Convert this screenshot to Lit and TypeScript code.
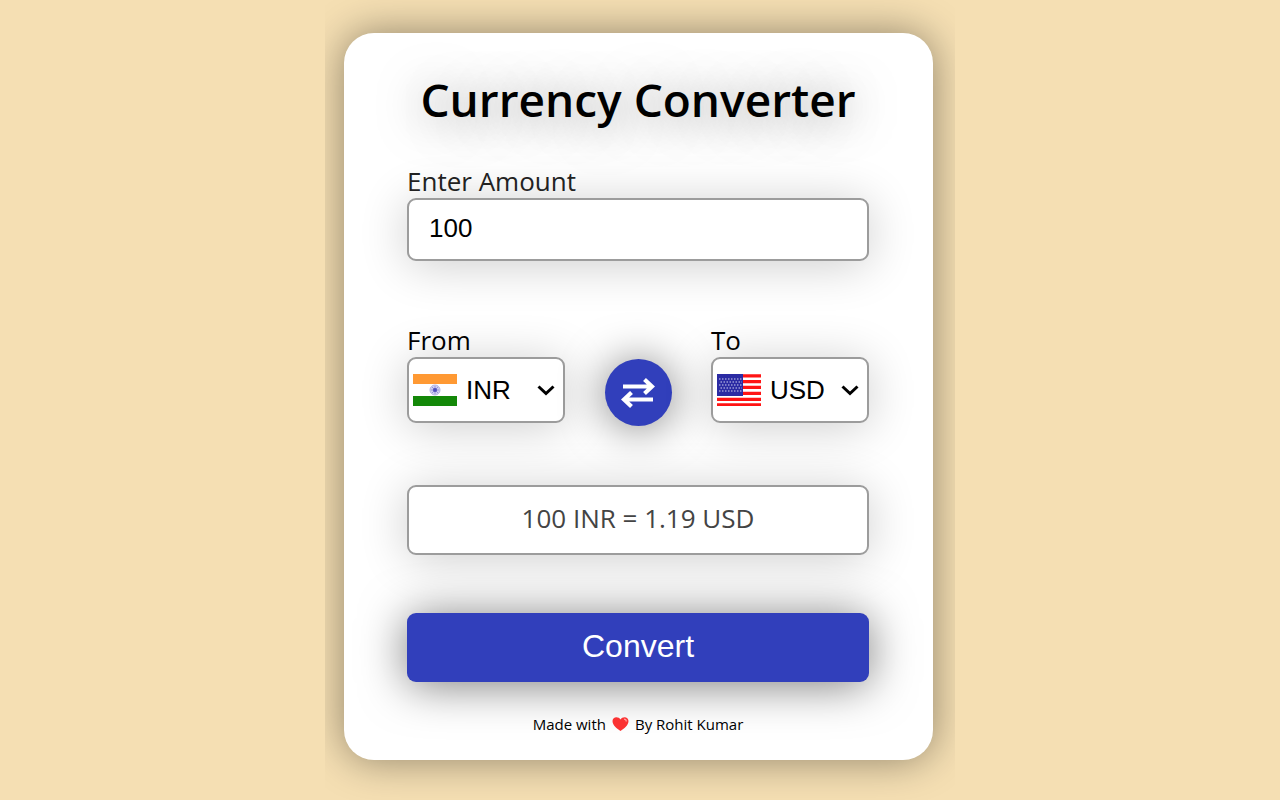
import { LitElement, html, css, svg } from "lit";
import { customElement, state } from "lit/decorators.js";

const USD_VALUE: Record<string, number> = { INR: 0.0119, USD: 1 };

const starRows = [3, 6, 9, 12, 15];

const indiaFlag = html`<svg class="flag" viewBox="0 0 44 32" aria-hidden="true">
  <rect width="44" height="32" fill="#fff" />
  <rect width="44" height="10" fill="#ff9933" />
  <rect y="22" width="44" height="10" fill="#138808" />
  <circle cx="22" cy="16" r="5" fill="#d0d0f0" stroke="#b4b4e2" stroke-width="1" />
  <path d="M22 12v8M18 16h8M19 13l6 6M25 13l-6 6" stroke="#8888d4" stroke-width="0.8" />
  <circle cx="22" cy="16" r="2" fill="#5050bc" />
</svg>`;

const usFlag = html`<svg class="flag" viewBox="0 0 44 32" aria-hidden="true">
  <rect width="44" height="32" fill="#fff" />
  <path
    d="M0 1.8h44M0 7.6h44M0 13.4h44M0 19.4h44M0 25.4h44M0 30.8h44"
    stroke="#ff1414"
    stroke-width="3.3"
  />
  <rect width="26" height="22" fill="#2b2ba3" />
  ${starRows.map(
    (y, i) => svg`<path d=${`M${i % 2 ? 3.5 : 2} ${y + 2}H25`} stroke="#9a9ad6" stroke-width="1.5" stroke-dasharray="1.5 1.5" />`
  )}
</svg>`;

const chevron = html`<svg class="chevron" viewBox="0 0 18 12" aria-hidden="true">
  <path d="M1.5 2.500L9 9.500L16.500 2.500" fill="none" stroke="#000" stroke-width="3" />
</svg>`;

@customElement("app-root")
export class AppRoot extends LitElement {
  static styles = css`
    :host {
      display: block;
      min-height: 100vh;
      background: #f5dfb3;
      color: #000;
      font-family: "Trebuchet MS", "Open Sans", sans-serif;
    }
    .stage {
      box-sizing: border-box;
      max-width: 630px;
      min-height: 100vh;
      margin: 0 auto;
      padding: 33px 22px 39px 19px;
      overflow: hidden;
    }
    .card {
      padding: 38px 64px 26px 63px;
      border-radius: 30px;
      background: #fff;
      box-shadow: 0 0 42px rgba(0, 0, 0, 0.42);
    }
    .title {
      margin: 0 0 38px;
      font-size: 46px;
      font-weight: 600;
      line-height: 56px;
      text-align: center;
      white-space: nowrap;
      text-shadow: 0 4px 44px rgba(0, 0, 0, 0.5);
    }
    .label {
      display: block;
      padding-bottom: 1px;
      font-size: 26px;
      font-weight: 500;
      line-height: 32px;
    }
    .soft {
      color: #222;
    }
    .box {
      box-sizing: border-box;
      border: 2px solid #9c9c9c;
      border-radius: 9px;
      background: #fff;
      box-shadow: 0 4px 48px rgba(0, 0, 0, 0.2);
    }
    .amount {
      display: block;
      width: 100%;
      height: 63px;
      margin-bottom: 63px;
      padding: 0 20px 2px;
      color: #000;
      font: 26px "Liberation Sans", Arial, sans-serif;
    }
    .row {
      display: flex;
      justify-content: space-between;
      align-items: flex-end;
      margin-bottom: 59px;
    }
    .field {
      padding-bottom: 3px;
    }
    .picker {
      display: flex;
      align-items: center;
      width: 158px;
      height: 66px;
      padding: 0 8px 0 4px;
    }
    .flag {
      flex: none;
      width: 44px;
      height: 32px;
    }
    .select {
      flex: 1;
      min-width: 0;
      padding: 0 0 0 9px;
      border: 0;
      appearance: none;
      background: transparent;
      color: #000;
      font: 26px "Liberation Sans", Arial, sans-serif;
    }
    .chevron {
      flex: none;
      width: 18px;
      height: 12px;
    }
    .swap {
      display: grid;
      place-items: center;
      width: 67px;
      height: 67px;
      padding: 0;
      border: 0;
      border-radius: 50%;
      background: #313fbb;
      box-shadow: 0 2px 44px rgba(0, 0, 0, 0.5);
      cursor: pointer;
    }
    .arrows {
      width: 34px;
      height: 32px;
    }
    .result {
      display: block;
      margin-bottom: 58px;
      padding: 15px 0 19px;
      color: #444;
      font-size: 26px;
      font-weight: 500;
      line-height: 32px;
      text-align: center;
    }
    .convert {
      display: block;
      width: 100%;
      height: 69px;
      margin-bottom: 32px;
      padding: 0 0 2px;
      border: 0;
      border-radius: 9px;
      background: #313fbb;
      box-shadow: 0 3px 46px rgba(0, 0, 0, 0.52);
      color: #fff;
      font: 32px "Liberation Sans", Arial, sans-serif;
      cursor: pointer;
    }
    .credit {
      display: flex;
      justify-content: center;
      align-items: center;
      gap: 6px;
      margin: 0;
      font-size: 15px;
      font-weight: 500;
      line-height: 20px;
    }
    .heart {
      width: 17px;
      height: 16px;
    }
  `;

  @state() private amount = "100";
  @state() private from = "INR";
  @state() private to = "USD";
  @state() private result = "100 INR = 1.19 USD";

  private convert(): void {
    const value = (Number(this.amount) * USD_VALUE[this.from]) / USD_VALUE[this.to];
    this.result = `${this.amount} ${this.from} = ${value.toFixed(2)} ${this.to}`;
  }

  private swap(): void {
    [this.from, this.to] = [this.to, this.from];
    this.convert();
  }

  private picker(id: string, label: string, value: string, set: (v: string) => void) {
    return html`<div class="field">
      <label class="label" for=${id}>${label}</label>
      <div class="box picker">
        ${value === "INR" ? indiaFlag : usFlag}
        <select
          class="select"
          id=${id}
          @change=${(e: Event) => set((e.target as HTMLSelectElement).value)}
        >
          ${Object.keys(USD_VALUE).map(
            (code) => html`<option .selected=${code === value}>${code}</option>`
          )}
        </select>
        ${chevron}
      </div>
    </div>`;
  }

  render() {
    return html`<div class="stage">
      <main class="card">
        <h1 class="title">Currency Converter</h1>
        <label class="label soft" for="amount">Enter Amount</label>
        <input
          class="box amount"
          id="amount"
          inputmode="decimal"
          .value=${this.amount}
          @input=${(e: Event) => (this.amount = (e.target as HTMLInputElement).value)}
        />
        <div class="row">
          ${this.picker("from", "From", this.from, (v) => (this.from = v))}
          <button class="swap" aria-label="Swap currencies" @click=${this.swap}>
            <svg class="arrows" viewBox="0 0 34 32" aria-hidden="true">
              <path
                d="M2 9.500H30M23.500 2.500L31 9.500L23.500 16.500M32 22.500H4M10.500 15.500L3 22.500L10.500 29.500"
                fill="none"
                stroke="#fff"
                stroke-width="4.200"
              />
            </svg>
          </button>
          ${this.picker("to", "To", this.to, (v) => (this.to = v))}
        </div>
        <output class="box result" for="amount from to">${this.result}</output>
        <button class="convert" @click=${this.convert}>Convert</button>
        <p class="credit">
          <span>Made with</span>
          <svg class="heart" viewBox="0 0 17 16" role="img" aria-label="love">
            <path
              d="M8.500 15C5 12.500 0.500 9.500 0.500 5C0.500 0.500 6.500 0 8.500 3.500C10.500 0 16.500 0.500 16.500 5C16.500 9.500 12 12.500 8.500 15Z"
              fill="#fb3232"
            />
            <path d="M12 3.200C13.500 3.200 14.300 4.200 14.300 5.500" fill="none" stroke="#ff9c9c" stroke-width="1.300" />
          </svg>
          <span>By Rohit Kumar</span>
        </p>
      </main>
    </div>`;
  }
}
